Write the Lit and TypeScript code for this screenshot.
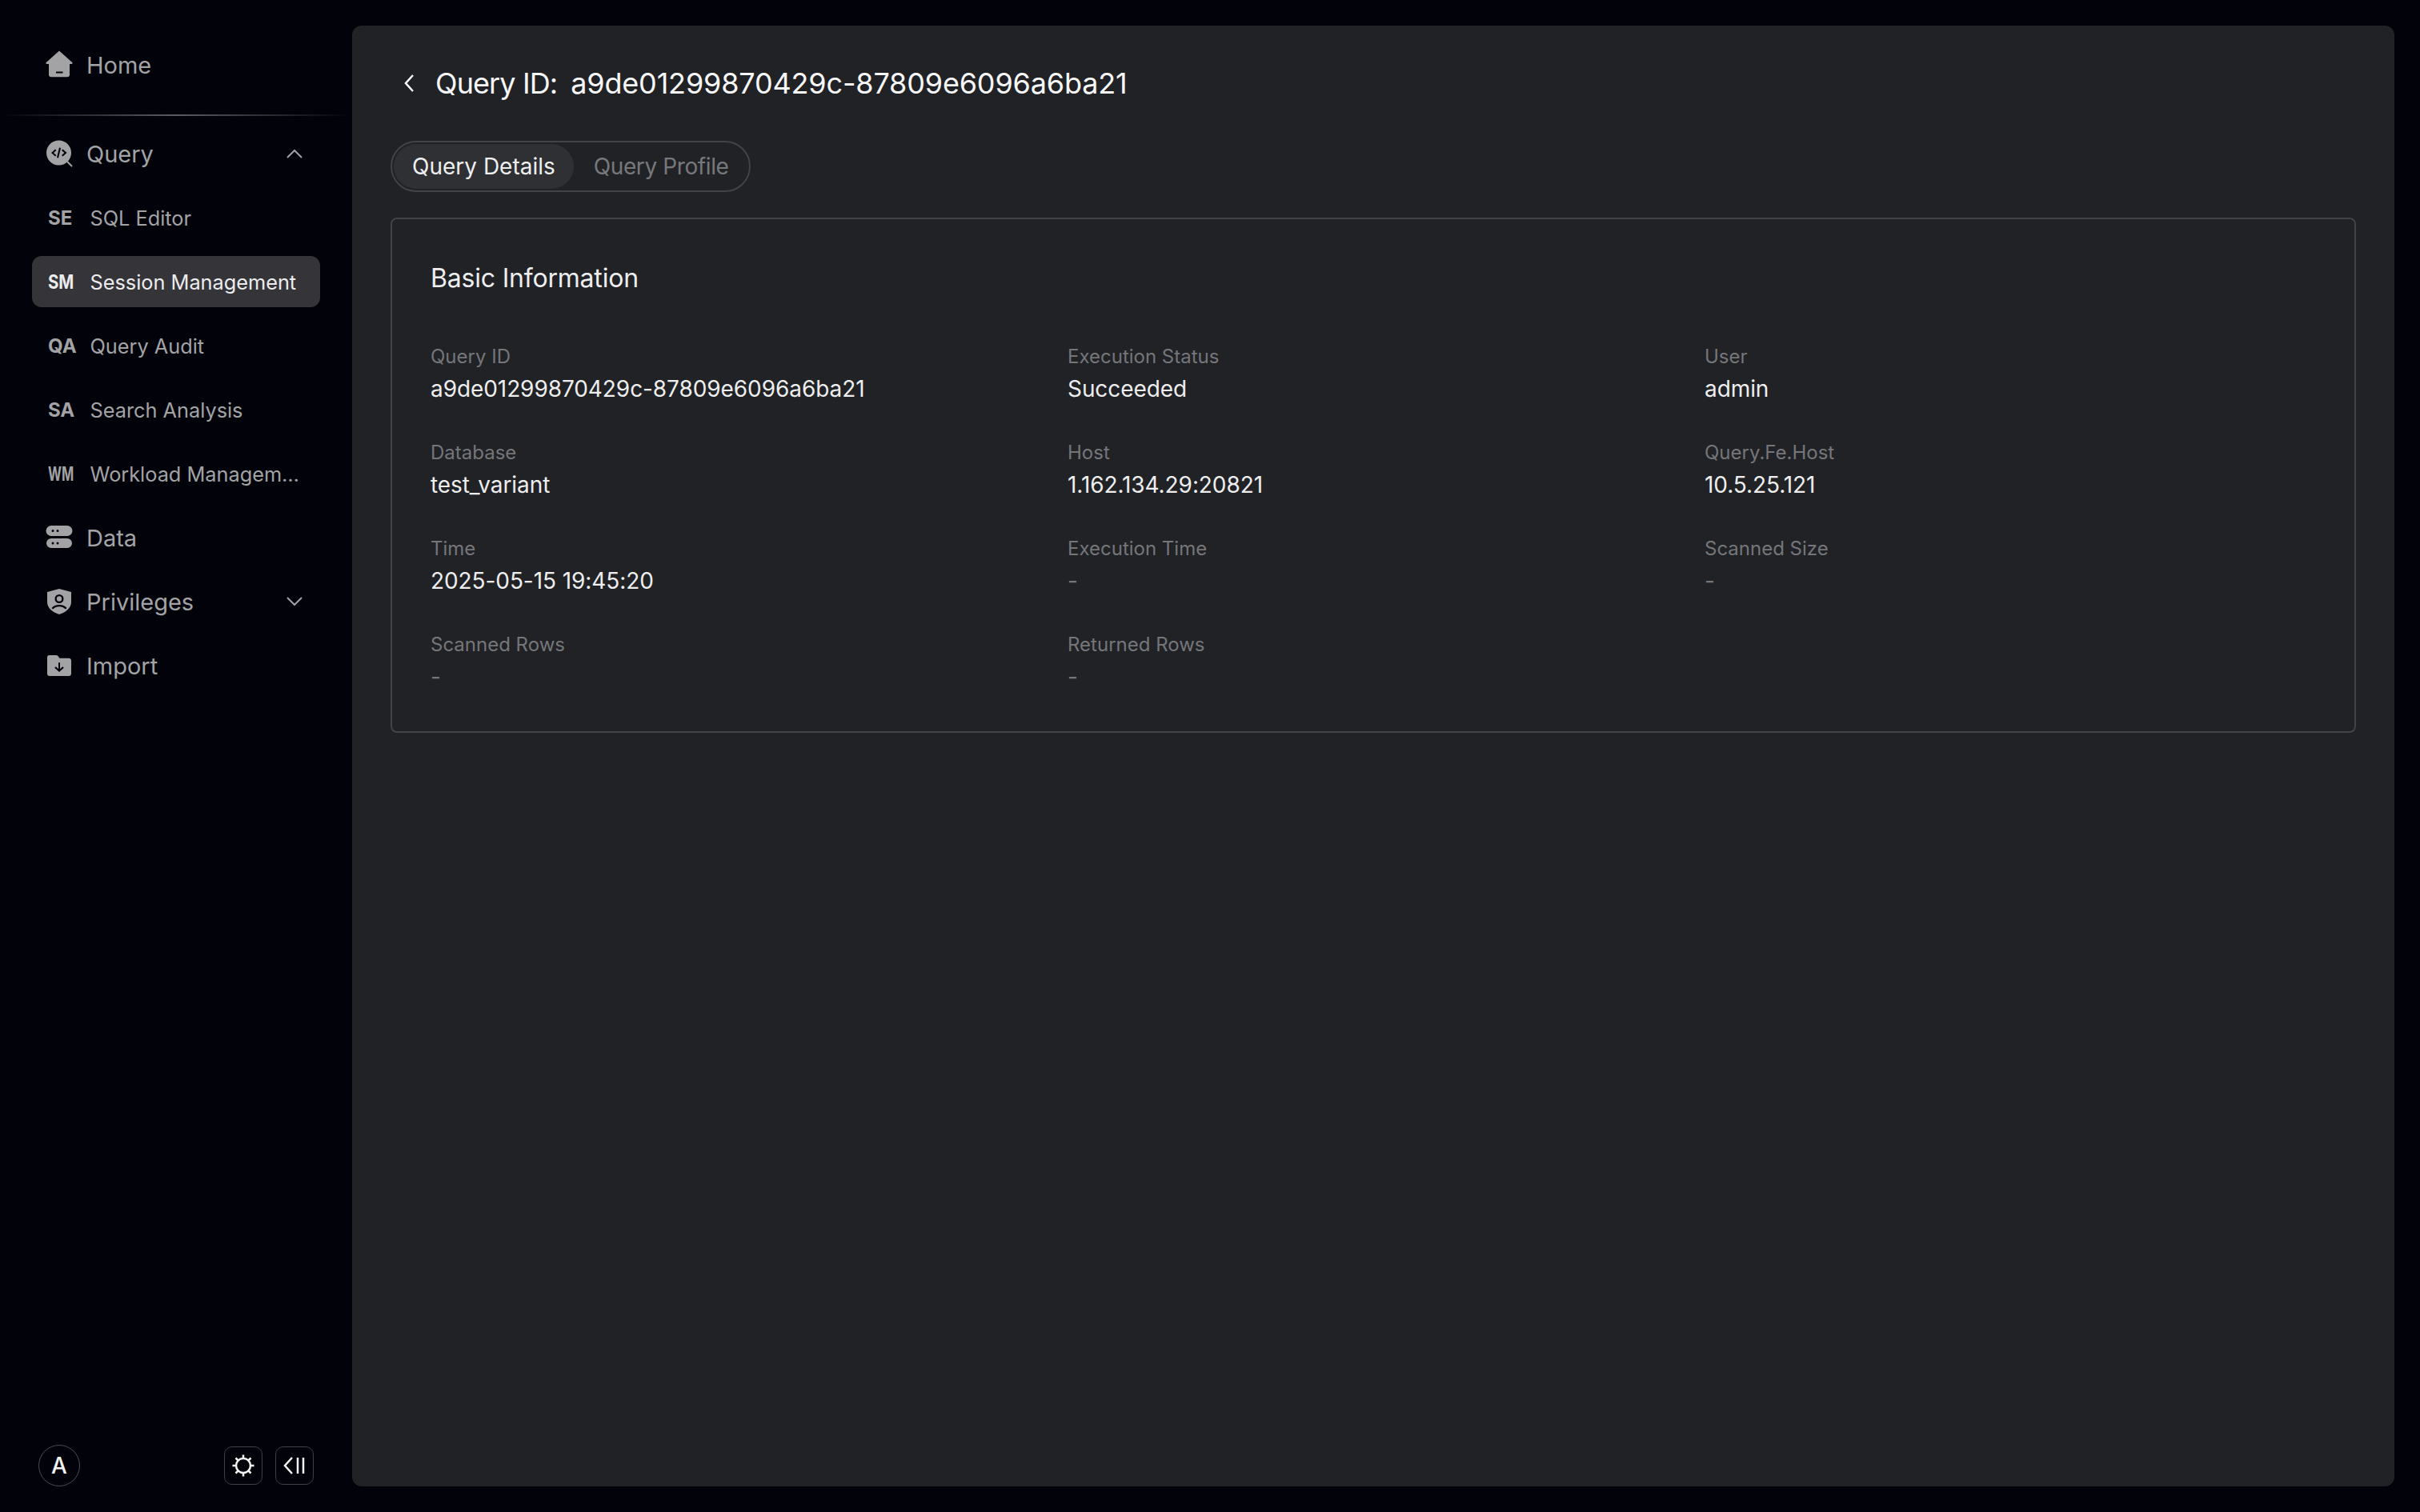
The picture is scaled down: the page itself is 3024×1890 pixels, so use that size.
import { LitElement, html, css, svg } from "lit";
import { customElement } from "lit/decorators.js";

const homeIcon = svg`<path transform="translate(-1 -1.500)" fill-rule="evenodd" d="M17 1 33.2 15.6c.8.8.3 2-.8 2H30V31c0 1.600-1.200 2.800-2.800 2.800H6.800C5.200 33.800 4 32.600 4 31V17.600H1.600c-1.100 0-1.600-1.200-.8-2L17 1ZM13 27v2h8.500v-2H13Z"/>`;
const queryIcon = svg`<path fill-rule="evenodd" d="M15.500 .5a15.500 15.500 0 1 1 0 31 15.500 15.500 0 0 1 0-31ZM18 10l-2-.4-3 12.400 2 .4L18 10ZM11 11.500 6 16l5 4.500 1.400-1.500L9 16l3.400-3-1.400-1.500Zm9.500 0L19 13l3.500 3-3.500 3 1.500 1.500 5-4.500-5-4.500Z"/><path d="m26 27 6 6" fill="none" stroke="currentColor" stroke-width="2"/>`;
const dataIcon = svg`<path transform="translate(1 1)" fill-rule="evenodd" d="M5 1h20a5 5 0 0 1 0 13H5A5 5 0 0 1 5 1Zm2 5a1.500 1.500 0 1 0 0 3 1.500 1.500 0 0 0 0-3Zm6 0a1.500 1.500 0 1 0 0 3 1.500 1.500 0 0 0 0-3ZM5 17h20a5 5 0 0 1 0 12H5a5 5 0 0 1 0-12Zm2 4.500a1.500 1.500 0 1 0 0 3 1.500 1.500 0 0 0 0-3Zm6 0a1.500 1.500 0 1 0 0 3 1.500 1.500 0 0 0 0-3Z"/>`;
const shieldIcon = svg`<path transform="translate(0 1)" fill-rule="evenodd" d="M16 0 31 4v12c0 8-6 13-15 16C7 29 1 24 1 16V4L16 0Zm0 7a5.500 5.500 0 1 0 0 11 5.500 5.500 0 0 0 0-11Zm0 2.300a3.200 3.200 0 1 1 0 6.400 3.200 3.200 0 0 1 0-6.400ZM16 20c-4 0-7.500 1.500-9.500 4l1.600 1.600C10 23.500 13 22.300 16 22.300s6 1.200 7.900 3.300l1.600-1.600c-2-2.500-5.500-4-9.500-4Z"/>`;
const importIcon = svg`<path transform="translate(1 4) scale(1 .93)" fill-rule="evenodd" d="M2.500 0H11c1 0 1.800.4 2.400 1.200L15.500 4H27c1.600 0 3 1.300 3 3v18c0 1.700-1.400 3-3 3H3c-1.700 0-3-1.300-3-3V2.500C0 1.100 1.100 0 2.500 0ZM14 10v8.500l-3.200-3.200-1.600 1.600 5.800 5.800 5.800-5.800-1.600-1.600-3.200 3.200V10h-2Z"/>`;

const icon = (body: unknown) => html`<svg class="ic" viewBox="0 0 34 34" fill="currentColor">${body}</svg>`;
const chevron = (up: boolean) =>
  html`<svg class="chev" viewBox="0 0 20 12" fill="none" stroke="currentColor" stroke-width="2"><path d=${up ? "M1 11 10 2l9 9" : "M1 1l9 9 9-9"}></path></svg>`;

const fields = [
  ["Query ID", "a9de01299870429c-87809e6096a6ba21"],
  ["Execution Status", "Succeeded"],
  ["User", "admin"],
  ["Database", "test_variant"],
  ["Host", "1.162.134.29:20821"],
  ["Query.Fe.Host", "10.5.25.121"],
  ["Time", "2025-05-15 19:45:20"],
  ["Execution Time", "-"],
  ["Scanned Size", "-"],
  ["Scanned Rows", "-"],
  ["Returned Rows", "-"],
];

const subs = [
  ["SE", "SQL Editor", false, ""],
  ["SM", "Session Management", true, "tight"],
  ["QA", "Query Audit", false, ""],
  ["SA", "Search Analysis", false, ""],
  ["WM", "Workload Management", false, "tighter"],
] as const;

@customElement("app-root")
export class AppRoot extends LitElement {
  static styles = css`
    :host {
      display: flex;
      width: 100vw;
      height: 100vh;
      overflow: hidden;
      background: #02030a;
      font-family: Inter, "Liberation Sans", sans-serif;
      color: #a3a3a6;
      box-sizing: border-box;
    }
    .side {
      width: 440px;
      flex: none;
      display: flex;
      flex-direction: column;
      box-sizing: border-box;
      padding: 49px 0 32px;
    }
    .nav {
      flex: 1;
      display: flex;
      flex-direction: column;
      gap: 16px;
      padding: 0 40px;
    }
    .row {
      height: 64px;
      display: flex;
      align-items: center;
      border-radius: 12px;
      font-size: 29px;
      padding: 0 0 0 18px;
      position: relative;
      white-space: nowrap;
    }
    .ic {
      width: 34px;
      height: 34px;
      flex: none;
      margin-right: 16px;
      overflow: visible;
    }
    .chev {
      width: 20px;
      height: 12px;
      margin-left: auto;
      margin-right: 22px;
    }
    .divider {
      height: 2px;
      margin: 14px -40px -1px;
      background: linear-gradient(90deg, transparent, #5b5b60 50%, transparent);
    }
    .sub {
      font-size: 25.300px;
      padding-left: 20px;
    }
    .sub.on {
      background: #343439;
      color: #ececee;
    }
    .abbr {
      width: 52.500px;
      flex: none;
      font-size: 24px;
      font-weight: 700;
      transform-origin: left center;
    }
    .abbr.tight {
      transform: scaleX(0.85);
    }
    .abbr.tighter {
      transform: scaleX(0.68);
    }
    .sub .txt {
      overflow: hidden;
      text-overflow: ellipsis;
      padding-right: 25px;
    }
    .foot {
      display: flex;
      align-items: center;
      padding: 0 48px;
      gap: 16px;
    }
    .avatar {
      width: 52px;
      height: 52px;
      box-sizing: border-box;
      border: 1.5px solid #4a4a4f;
      border-radius: 50%;
      display: flex;
      align-items: center;
      justify-content: center;
      color: #f2f2f2;
      font-size: 28px;
      font-weight: 500;
      margin-right: auto;
    }
    .btn {
      width: 48px;
      height: 48px;
      box-sizing: border-box;
      border: 1.5px solid #3f3f44;
      border-radius: 10px;
      display: flex;
      align-items: center;
      justify-content: center;
      color: #f2f2f2;
    }
    .btn svg {
      width: 30px;
      height: 30px;
    }
    .main {
      flex: none;
      width: 2552px;
      height: 1826px;
      margin-top: 32px;
      background: #212226;
      border-radius: 12px;
      box-sizing: border-box;
      padding: 0 48px;
      display: flex;
      flex-direction: column;
    }
    .title {
      height: 144px;
      flex: none;
      display: flex;
      align-items: center;
      gap: 17px;
      color: #f7f7f8;
      font-size: 36px;
      font-weight: 400;
      white-space: pre;
    }
    .title svg {
      width: 14px;
      height: 24px;
      margin: 0 9px 0 16px;
    }
    .t-label {
      letter-spacing: -0.9px;
    }
    .t-id {
      letter-spacing: -0.17px;
    }
    .tabs {
      width: 450px;
      height: 64px;
      box-sizing: border-box;
      border: 2px solid #424347;
      border-radius: 32px;
      display: flex;
      align-items: center;
      padding: 2px;
      gap: 2px;
      font-size: 28px;
      font-weight: 400;
      color: #77787b;
      flex: none;
      white-space: nowrap;
    }
    .tab {
      height: 56px;
      display: flex;
      align-items: center;
      padding: 0 23px;
      border-radius: 28px;
      letter-spacing: -0.4px;
    }
    .tab.on {
      background: #2f3034;
      color: #efeff0;
      letter-spacing: 0;
    }
    .card {
      margin-top: 32px;
      height: 644px;
      flex: none;
      box-sizing: border-box;
      border: 2px solid #424347;
      border-radius: 8px;
      padding: 50px 48px 48px;
    }
    .card h2 {
      margin: 0 0 56px;
      height: 48px;
      line-height: 48px;
      font-size: 32px;
      font-weight: 400;
      letter-spacing: -0.2px;
      color: #eeeeef;
    }
    .grid {
      display: grid;
      grid-template-columns: repeat(3, 1fr);
      gap: 32px;
    }
    .cell {
      height: 88px;
    }
    .lbl {
      font-size: 24px;
      line-height: 36px;
      height: 36px;
      color: #75767a;
    }
    .val {
      font-size: 28px;
      line-height: 44px;
      letter-spacing: -0.08px;
      color: #eeeeef;
    }
    .val.dash {
      color: #75767a;
    }
  `;

  render() {
    return html`
      <aside class="side">
        <nav class="nav">
          <div class="row">${icon(homeIcon)}<span>Home</span></div>
          <div class="divider"></div>
          <div class="row">${icon(queryIcon)}<span>Query</span>${chevron(true)}</div>
          ${subs.map(
            ([a, t, on, fit]) => html`<div class="row sub ${on ? "on" : ""}">
              <span class="abbr ${fit}">${a}</span><span class="txt">${t}</span>
            </div>`
          )}
          <div class="row">${icon(dataIcon)}<span>Data</span></div>
          <div class="row">${icon(shieldIcon)}<span>Privileges</span>${chevron(false)}</div>
          <div class="row">${icon(importIcon)}<span>Import</span></div>
        </nav>
        <div class="foot">
          <div class="avatar">A</div>
          <div class="btn">
            <svg viewBox="0 0 30 30" fill="none" stroke="currentColor" stroke-width="2.500" stroke-linecap="butt">
              <circle cx="15" cy="15" r="9"></circle>
              <path d="M15 1.500v4M15 24.500v4M1.500 15h4M24.500 15h4M5.500 5.500l3 3M21.500 21.500l3 3M5.500 24.500l3-3M21.500 8.500l3-3"></path>
            </svg>
          </div>
          <div class="btn">
            <svg viewBox="0 0 30 30" fill="none" stroke="currentColor" stroke-width="2.500">
              <path d="M12 5 3 15l9 10M19 5v20M26 5v20"></path>
            </svg>
          </div>
        </div>
      </aside>
      <main class="main">
        <div class="title">
          <svg viewBox="0 0 14 24" fill="none" stroke="currentColor" stroke-width="2.500"><path d="M12 2 3 12l9 10"></path></svg>
          <span class="t-label">Query ID:</span><span class="t-id">a9de01299870429c-87809e6096a6ba21</span>
        </div>
        <div class="tabs">
          <div class="tab on">Query Details</div>
          <div class="tab">Query Profile</div>
        </div>
        <section class="card">
          <h2>Basic Information</h2>
          <div class="grid">
            ${fields.map(
              ([l, v]) => html`<div class="cell">
                <div class="lbl">${l}</div>
                <div class="val ${v === "-" ? "dash" : ""}">${v}</div>
              </div>`
            )}
          </div>
        </section>
      </main>
    `;
  }
}
